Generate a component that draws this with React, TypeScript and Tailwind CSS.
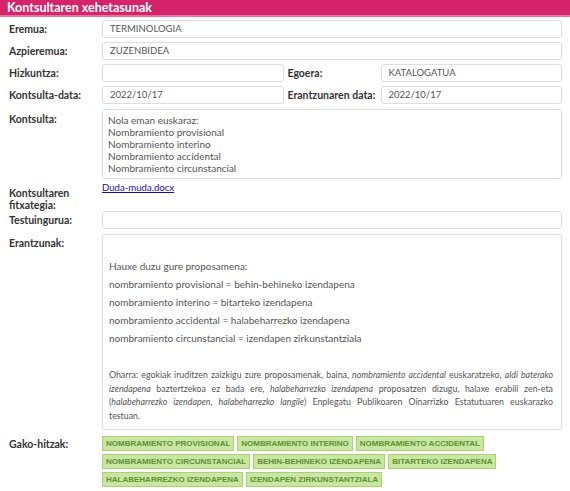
import React from "react";

const font = { fontFamily: "Lato, 'Open Sans', sans-serif" };

function Label({ children, className = "" }: { children: React.ReactNode; className?: string }) {
  return <div className={"w-[93px] shrink-0 text-[10.5px] font-bold text-[#333] leading-[12px] " + className}>{children}</div>;
}

function Input({ value = "", className = "" }: { value?: string; className?: string }) {
  return (
    <div className={"h-[18px] rounded-[3px] border border-[#dedede] bg-white px-[7px] text-[9.5px] leading-[16px] text-[#555] " + className}>
      {value}
    </div>
  );
}

const tags = [
  "NOMBRAMIENTO PROVISIONAL",
  "NOMBRAMIENTO INTERINO",
  "NOMBRAMIENTO ACCIDENTAL",
  "NOMBRAMIENTO CIRCUNSTANCIAL",
  "BEHIN-BEHINEKO IZENDAPENA",
  "BITARTEKO IZENDAPENA",
  "HALABEHARREZKO IZENDAPENA",
  "IZENDAPEN ZIRKUNSTANTZIALA",
];

const jl = "whitespace-nowrap text-justify [text-align-last:justify]";

export default function App() {
  return (
    <div className="w-[570px] h-[491px] bg-white overflow-hidden" style={font}>
      <div className="h-[17px] bg-[#d6246b] border-b-2 border-[#e8739e] pl-[7px] text-[12.5px] font-bold leading-[15px] text-white">
        Kontsultaren xehetasunak
      </div>
      <div className="pl-[9px] pr-[8px] pt-[3px] flex flex-col">
        <div className="flex items-center">
          <Label>Eremua:</Label>
          <Input value="TERMINOLOGIA" className="flex-1" />
        </div>
        <div className="flex items-center mt-[4px]">
          <Label>Azpieremua:</Label>
          <Input value="ZUZENBIDEA" className="flex-1" />
        </div>
        <div className="flex items-center mt-[4px]">
          <Label>Hizkuntza:</Label>
          <Input className="flex-1" />
          <Label className="ml-[4px] w-[88px]">Egoera:</Label>
          <Input value="KATALOGATUA" className="flex-1" />
        </div>
        <div className="flex items-center mt-[4px]">
          <Label>Kontsulta-data:</Label>
          <Input value="2022/10/17" className="flex-1" />
          <Label className="ml-[4px] w-[88px]">Erantzunaren data:</Label>
          <Input value="2022/10/17" className="flex-1" />
        </div>
        <div className="flex items-start mt-[5px]">
          <Label className="pt-[4px]">Kontsulta:</Label>
          <div className="flex-1 h-[70px] rounded-[3px] border border-[#dedede] px-[5px] pt-[4px] text-[10px] leading-[12px] text-[#555]">
            <div>Nola eman euskaraz:</div>
            <div>Nombramiento provisional</div>
            <div>Nombramiento interino</div>
            <div>Nombramiento accidental</div>
            <div>Nombramiento circunstancial</div>
          </div>
        </div>
        <div className="flex items-start mt-[3px] h-[29px]">
          <Label className="pt-[5px] leading-[10px]">Kontsultaren<br />fitxategia:</Label>
          <a href="#" className="text-[9.6px] leading-[12px] text-[#1a0dab] underline">Duda-muda.docx</a>
        </div>
        <div className="flex items-center">
          <Label>Testuingurua:</Label>
          <Input className="flex-1" />
        </div>
        <div className="flex items-start mt-[5px]">
          <Label className="pt-[3px]">Erantzunak:</Label>
          <div className="flex-1 min-w-0 h-[196px] rounded-[3px] border border-[#e2e2e2] shadow-[0_0_2px_rgba(0,0,0,0.08)] pl-[6px] pr-[8px] pt-[25px] text-[10px] leading-[12px] text-[#555]">
            <p>Hauxe duzu gure proposamena:</p>
            <p className="mt-[6px]">nombramiento provisional = behin-behineko izendapena</p>
            <p className="mt-[6px]">nombramiento interino = bitarteko izendapena</p>
            <p className="mt-[6px]">nombramiento accidental = halabeharrezko izendapena</p>
            <p className="mt-[6px]">nombramiento circunstancial = izendapen zirkunstantziala</p>
            <div className="mt-[24px] text-[8.8px] leading-[13.7px]">
              <div className={jl}>
                Oharra: egokiak iruditzen zaizkigu zure proposamenak, baina, <i>nombramiento accidental</i> euskaratzeko, <i>aldi baterako</i>
              </div>
              <div className={jl}>
                <i>izendapena</i> baztertzekoa ez bada ere, <i>halabeharrezko izendapena</i> proposatzen dizugu, halaxe erabili zen-eta
              </div>
              <div className={jl}>
                (<i>halabeharrezko izendapen</i>, <i>halabeharrezko langile</i>) Enplegatu Publikoaren Oinarrizko Estatutuaren euskarazko
              </div>
              <div>testuan.</div>
            </div>
          </div>
        </div>
        <div className="flex items-start mt-[6px]">
          <Label className="pt-[2px]">Gako-hitzak:</Label>
          <div className="flex-1 flex flex-wrap gap-[3px]" style={{ fontFamily: "'Liberation Sans', Arial, sans-serif" }}>
            {tags.map((t) => (
              <span key={t} className="h-[15px] border border-[#a8d36f] bg-[#c9e6a2] px-[3px] text-[8px] font-bold leading-[13px] text-[#5d9130]">
                {t}
              </span>
            ))}
          </div>
        </div>
      </div>
    </div>
  );
}
